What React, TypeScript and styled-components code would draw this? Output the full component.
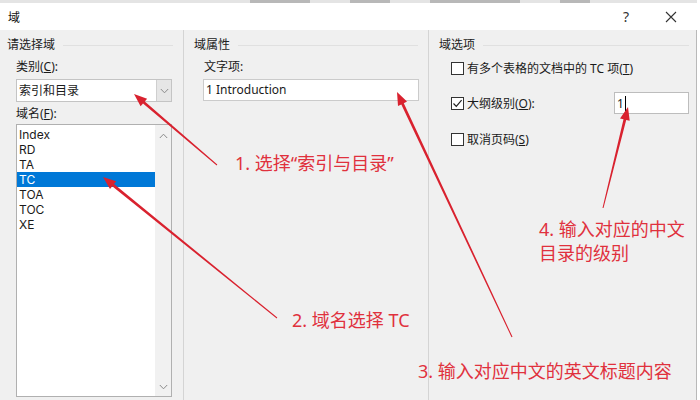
import React from "react";
import styled, { createGlobalStyle } from "styled-components";

const GlobalStyle = createGlobalStyle`
  html, body {
    margin: 0;
    padding: 0;
    background: #ffffff;
  }
  * {
    box-sizing: border-box;
  }
`;

const RED = "#e0313d";

type Pt = [number, number];

// tapered arrow: thin at the tail, thicker near the head
function arrowPath(tail: Pt, tip: Pt) {
  const dx = tip[0] - tail[0];
  const dy = tip[1] - tail[1];
  const len = Math.hypot(dx, dy);
  const ux = dx / len;
  const uy = dy / len;
  const nx = -uy;
  const ny = ux;
  const head = 13;
  const bx = tip[0] - ux * head;
  const by = tip[1] - uy * head;
  const p = (x: number, y: number) => `${x.toFixed(1)},${y.toFixed(1)}`;
  return [
    "M" + p(tail[0] + nx * 0.5, tail[1] + ny * 0.5),
    "L" + p(bx + nx * 1.4, by + ny * 1.4),
    "L" + p(bx + nx * 5, by + ny * 5),
    "L" + p(tip[0], tip[1]),
    "L" + p(bx - nx * 5, by - ny * 5),
    "L" + p(bx - nx * 1.4, by - ny * 1.4),
    "L" + p(tail[0] - nx * 0.5, tail[1] - ny * 0.5),
    "Z",
  ].join(" ");
}

const arrows: { tail: Pt; tip: Pt }[] = [
  { tail: [217, 165], tip: [134, 94] },
  { tail: [277, 318], tip: [103, 177] },
  { tail: [512, 337], tip: [397, 92] },
  { tail: [603, 208], tip: [628, 107] },
];

const fieldNames = ["Index", "RD", "TA", "TC", "TOA", "TOC", "XE"];

export default function App() {
  return (
    <>
      <GlobalStyle />
      <Window>
        <TopStrip>
          <StripBit $w={60} />
          <StripBit $w={40} />
          <StripBit $w={90} />
          <StripBit $w={30} />
        </TopStrip>
        <TitleBar>
          <TitleText>域</TitleText>
          <TitleButtons>
            <HelpButton>?</HelpButton>
            <CloseButton>
              <svg width="12" height="12" viewBox="0 0 12 12">
                <path d="M1 1 L11 11 M11 1 L1 11" stroke="#333" strokeWidth="1.1" fill="none" />
              </svg>
            </CloseButton>
          </TitleButtons>
        </TitleBar>

        <Body>
          <Panel $width={183} $padLeft={7} $padRight={10}>
            <GroupHeader>请选择域</GroupHeader>
            <GroupContent $indent={9}>
              <FieldLabel $top={6}>
                类别(<u>C</u>):
              </FieldLabel>
              <ComboBox>
                <ComboText>索引和目录</ComboText>
                <ComboButton>
                  <Chevron />
                </ComboButton>
              </ComboBox>
              <FieldLabel $top={4}>
                域名(<u>F</u>):
              </FieldLabel>
              <ListBox>
                <ListItems>
                  {fieldNames.map((name) => (
                    <ListItem key={name} $selected={name === "TC"}>
                      {name}
                    </ListItem>
                  ))}
                </ListItems>
                <ScrollBar>
                  <Chevron up />
                  <Chevron />
                </ScrollBar>
              </ListBox>
            </GroupContent>
          </Panel>

          <Panel $width={245} $padLeft={10} $padRight={10} $divider>
            <GroupHeader>域属性</GroupHeader>
            <GroupContent $indent={10}>
              <FieldLabel $top={6}>文字项:</FieldLabel>
              <TextInput $width={216}>1 Introduction</TextInput>
            </GroupContent>
          </Panel>

          <Panel $padLeft={10} $padRight={7} $divider $grow>
            <GroupHeader>域选项</GroupHeader>
            <GroupContent $indent={12}>
              <OptionRow $top={4}>
                <CheckBox />
                <OptionLabel>
                  有多个表格的文档中的 TC 项(<u>T</u>)
                </OptionLabel>
              </OptionRow>
              <OptionRow $top={13}>
                <CheckBox>
                  <svg width="11" height="11" viewBox="0 0 11 11">
                    <path d="M1.5 5.5 L4.3 8.3 L9.6 2.2" stroke="#222" strokeWidth="1.2" fill="none" />
                  </svg>
                </CheckBox>
                <OptionLabel>
                  大纲级别(<u>O</u>):
                </OptionLabel>
                <LevelInput>
                  1<Caret />
                </LevelInput>
              </OptionRow>
              <OptionRow $top={14}>
                <CheckBox />
                <OptionLabel>
                  取消页码(<u>S</u>)
                </OptionLabel>
              </OptionRow>
            </GroupContent>
          </Panel>
        </Body>

        <ArrowLayer width="700" height="400" viewBox="0 0 700 400">
          {arrows.map((a, i) => (
            <path key={i} d={arrowPath(a.tail, a.tip)} fill="#d9222f" />
          ))}
        </ArrowLayer>

        <Note $left={235} $top={151}>1. 选择“索引与目录”</Note>
        <Note $left={292} $top={308}>2. 域名选择 TC</Note>
        <Note $left={418} $top={359}>3. 输入对应中文的英文标题内容</Note>
        <Note $left={539} $top={217}>
          4. 输入对应的中文
          <br />
          目录的级别
        </Note>
      </Window>
    </>
  );
}

function Chevron({ up }: { up?: boolean }) {
  return (
    <svg width="9" height="6" viewBox="0 0 9 6">
      <path
        d={up ? "M0.8 5 L4.5 1.2 L8.2 5" : "M0.8 1 L4.5 4.8 L8.2 1"}
        stroke="#8a8a8a"
        strokeWidth="1"
        fill="none"
      />
    </svg>
  );
}

const Window = styled.div`
  position: relative;
  width: 700px;
  height: 400px;
  overflow: hidden;
  display: flex;
  flex-direction: column;
  background: #f0f0f0;
  border-right: 3px solid #ffffff;
  box-shadow: inset -1px 0 0 #b9b9b9;
  font-family: "Noto Sans", "Noto Sans CJK SC", sans-serif;
  font-size: 12px;
  color: #1a1a1a;
`;

const TopStrip = styled.div`
  height: 3px;
  display: flex;
  gap: 40px;
  padding-left: 250px;
  background: #e4e4e4;
`;

const StripBit = styled.div<{ $w: number }>`
  width: ${(p) => p.$w}px;
  background: #b8b8b8;
`;

const TitleBar = styled.div`
  height: 27px;
  display: flex;
  align-items: center;
  justify-content: space-between;
  background: #ffffff;
  padding-left: 8px;
`;

const TitleText = styled.span`
  font-size: 12px;
  color: #111;
`;

const TitleButtons = styled.div`
  display: flex;
  align-items: center;
  height: 100%;
`;

const HelpButton = styled.div`
  width: 44px;
  text-align: center;
  font-size: 14px;
  color: #333;
`;

const CloseButton = styled.div`
  width: 46px;
  height: 100%;
  display: flex;
  align-items: center;
  justify-content: center;
  margin-right: 3px;
`;

const Body = styled.div`
  flex: 1;
  display: flex;
  padding-right: 1px;
`;

const Panel = styled.div<{
  $width?: number;
  $padLeft: number;
  $padRight: number;
  $divider?: boolean;
  $grow?: boolean;
}>`
  width: ${(p) => (p.$width ? `${p.$width}px` : "auto")};
  flex: ${(p) => (p.$grow ? 1 : "none")};
  padding: 7px ${(p) => p.$padRight}px 0 ${(p) => p.$padLeft}px;
  border-left: ${(p) => (p.$divider ? "1px solid #d4d4d4" : "none")};
  display: flex;
  flex-direction: column;
`;

const GroupHeader = styled.div`
  display: flex;
  align-items: center;
  height: 16px;
  line-height: 16px;
  font-size: 12px;
  color: #222;

  &::after {
    content: "";
    flex: 1;
    height: 1px;
    margin-left: 8px;
    background: #e0e0e0;
  }
`;

const GroupContent = styled.div<{ $indent: number }>`
  display: flex;
  flex-direction: column;
  padding-left: ${(p) => p.$indent}px;
`;

const FieldLabel = styled.div<{ $top: number }>`
  margin-top: ${(p) => p.$top}px;
  height: 16px;
  line-height: 16px;
  margin-bottom: 4px;

  u {
    text-decoration: underline;
  }
`;

const ComboBox = styled.div`
  width: 156px;
  height: 23px;
  display: flex;
  background: #ffffff;
  border: 1px solid #c4c4c4;
`;

const ComboText = styled.div`
  flex: 1;
  line-height: 21px;
  padding-left: 2px;
`;

const ComboButton = styled.div`
  width: 15px;
  display: flex;
  align-items: center;
  justify-content: center;
  background: #e6e6e6;
  border-left: 1px solid #cfcfcf;
`;

const ListBox = styled.div`
  width: 156px;
  height: 273px;
  margin-top: -2px;
  display: flex;
  background: #ffffff;
  border: 1px solid #b0b0b0;
`;

const ListItems = styled.div`
  flex: 1;
  padding-top: 2px;
`;

const ListItem = styled.div<{ $selected?: boolean }>`
  height: 15px;
  line-height: 15px;
  padding-left: 2px;
  font-family: Inter, "Noto Sans", sans-serif;
  font-size: 12px;
  background: ${(p) => (p.$selected ? "#0078d7" : "transparent")};
  color: ${(p) => (p.$selected ? "#ffffff" : "#1a1a1a")};
`;

const ScrollBar = styled.div`
  width: 16px;
  display: flex;
  flex-direction: column;
  align-items: center;
  justify-content: space-between;
  padding: 8px 0 6px;
  background: #f1f1f1;
`;

const TextInput = styled.div<{ $width: number }>`
  width: ${(p) => p.$width}px;
  height: 22px;
  line-height: 20px;
  padding-left: 2px;
  background: #ffffff;
  border: 1px solid #cbcbcb;
  margin-left: -1px;
`;

const OptionRow = styled.div<{ $top: number }>`
  display: flex;
  align-items: center;
  height: 22px;
  margin-top: ${(p) => p.$top}px;
`;

const CheckBox = styled.div`
  width: 13px;
  height: 13px;
  display: flex;
  align-items: center;
  justify-content: center;
  background: #ffffff;
  border: 1px solid #333333;
  margin-right: 3px;
`;

const OptionLabel = styled.span`
  flex: none;
  white-space: nowrap;

  u {
    text-decoration: underline;
  }
`;

const LevelInput = styled.div`
  width: 75px;
  height: 22px;
  margin-left: auto;
  display: flex;
  align-items: center;
  padding-left: 2px;
  background: #ffffff;
  border: 1px solid #bdbdbd;
`;

const Caret = styled.span`
  display: inline-block;
  width: 1px;
  height: 15px;
  margin-left: 1px;
  background: #000;
`;

const ArrowLayer = styled.svg`
  position: absolute;
  left: 0;
  top: 0;
  pointer-events: none;
`;

const Note = styled.div<{ $left: number; $top: number }>`
  position: absolute;
  left: ${(p) => p.$left}px;
  top: ${(p) => p.$top}px;
  font-family: "Noto Sans", "Noto Sans CJK SC", sans-serif;
  font-size: 18px;
  line-height: 24px;
  color: ${RED};
  white-space: nowrap;
`;
